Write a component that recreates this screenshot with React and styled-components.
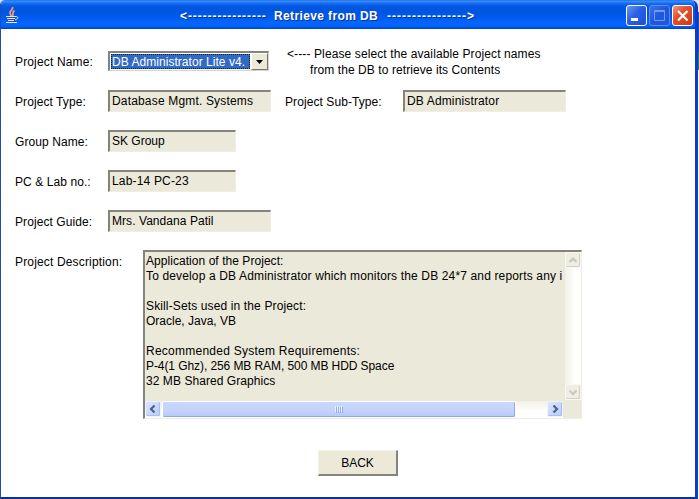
import React from 'react';
import styled, { createGlobalStyle } from 'styled-components';

const GlobalStyle = createGlobalStyle`
  * { box-sizing: border-box; }
  body {
    margin: 0;
    background: #fff;
    overflow: hidden;
    font-family: "Liberation Sans", Arial, sans-serif;
    font-size: 12px;
    color: #000;
  }
`;

const Desktop = styled.div`
  width: 699px;
  height: 499px;
  background: linear-gradient(to bottom, #dfe3f5 0 12px, #2450a8 12px 52px, #2f7a58 52px 70px, #fbfbff 70px);
`;

const Window = styled.div`
  width: 698px;
  height: 499px;
  display: flex;
  flex-direction: column;
  background: #fff;
  border: solid;
  border-width: 0 3px 2px 1px;
  border-color: #0a35b8 #0a3cc8 #0c2f9c #1f4fa8;
  border-radius: 5px 7px 0 0;
  overflow: hidden;
`;

const TitleBar = styled.header`
  height: 29px;
  flex: none;
  margin-right: -3px;
  display: flex;
  align-items: center;
  padding: 2px 5px 0 3px;
  background: linear-gradient(to bottom, #1c5fdc 0, #3b92ff 1px, #1873f5 3px, #0458e4 6px, #0055e0 11px, #005bef 18px, #0566ff 23px, #0264fb 26px, #0050dc 28px, #0040bb 29px);
`;

const JavaIcon = styled.svg`
  width: 16px;
  height: 18px;
  flex: none;
  margin-top: -2px;
`;

const Title = styled.h1`
  margin: 0 0 0 160px;
  display: flex;
  align-items: center;
  font-size: 12px;
  line-height: 16px;
  font-weight: 700;
  color: #fff;
  white-space: pre;
  text-shadow: 1px 1px 0 #0a3391;
`;

const TitlePart = styled.span`
  width: ${(p) => p.$width}px;
  letter-spacing: ${(p) => p.$spacing}px;
`;

const Controls = styled.div`
  margin-left: auto;
  display: flex;
  gap: 2px;
`;

const ControlButton = styled.button`
  width: 21px;
  height: 21px;
  padding: 0;
  border: 1px solid ${(p) => (p.$tone === 'dim' ? '#5a8df0' : '#fff')};
  border-radius: 3px;
  background: ${(p) =>
    p.$tone === 'close'
      ? 'linear-gradient(135deg, #f09a80, #e2502c 40%, #cf3a14)'
      : p.$tone === 'dim'
        ? 'linear-gradient(135deg, #3c72e4, #2058dc 50%, #1a58e0)'
        : 'linear-gradient(135deg, #6d97f4, #2a5ee4 45%, #1c50d8)'};

  svg { display: block; width: 19px; height: 19px; }
`;

const Content = styled.main`
  flex: 1;
  padding: 12px 0 0 14px;
`;

const Row = styled.div`
  display: flex;
  align-items: flex-start;
  height: ${(p) => p.$height || 40}px;
`;

const Label = styled.label`
  width: ${(p) => p.$width}px;
  flex: none;
  padding-top: 13px;
  line-height: 16px;
  letter-spacing: ${(p) => p.$spacing ?? 0.08}px;
  white-space: nowrap;
`;

const Field = styled.div`
  width: ${(p) => p.$width}px;
  height: 22px;
  flex: none;
  margin: 9px ${(p) => p.$after || 0}px 0 0;
  padding: 2px 0 0 2px;
  border: solid;
  border-width: 2px 1px 1px 2px;
  border-color: #858478 #f0eee2 #f0eee2 #858478;
  background: #ebe9d9;
  line-height: 15px;
  letter-spacing: ${(p) => p.$spacing || 0}px;
  white-space: nowrap;
`;

const Combo = styled.div`
  width: 161px;
  height: 20px;
  flex: none;
  margin: 10px 17px 0 0;
  display: flex;
  border: solid;
  border-width: 2px 1px 1px 2px;
  border-color: #858478 #d8d5c6 #d8d5c6 #858478;
  background: #fff;
`;

const Selected = styled.div`
  flex: 1;
  margin: 1px 1px 1px 1px;
  border: 1px dotted #0c1c3c;
  background: #316ac5;
  color: #fff;
  line-height: 14px;
  letter-spacing: ${(p) => p.$spacing}px;
  white-space: nowrap;
  overflow: hidden;
`;

const DropButton = styled.button`
  width: 17px;
  padding: 0;
  display: flex;
  align-items: center;
  justify-content: center;
  border: 1px solid;
  border-color: #fff #77766a #77766a #fff;
  background: #ece9d8;
`;

const Hint = styled.p`
  margin: 5px 0 0 1px;
  line-height: 16px;
  white-space: pre;
`;

const HintLine = styled.span`
  display: block;
  padding-left: ${(p) => p.$indent}px;
  letter-spacing: ${(p) => p.$spacing}px;
`;

const TextArea = styled.div`
  width: 439px;
  height: 169px;
  margin-top: 9px;
  display: grid;
  grid-template-columns: 1fr 18px;
  grid-template-rows: 1fr 17px;
  border: solid;
  border-width: 2px 1px 1px 2px;
  border-color: #858478 #f0eee2 #f0eee2 #858478;
  background: #ebe9d9;
`;

const TextBody = styled.div`
  min-width: 0;
  padding: 2px 0 0 1px;
  overflow: hidden;
  white-space: pre;
`;

const TextLine = styled.div`
  height: 15px;
  line-height: 15px;
  letter-spacing: ${(p) => p.$spacing || 0}px;
`;

const VerticalBar = styled.div`
  margin: 0 0 1px 2px;
  display: flex;
  flex-direction: column;
  justify-content: space-between;
  background: linear-gradient(to right, #f1f0e8, #fefefb 60%, #fff);
`;

const HorizontalBar = styled.div`
  display: flex;
  align-items: stretch;
  background: linear-gradient(to bottom, #f1f0e8, #fefefb 60%, #fff);
`;

const ArrowButton = styled.button`
  width: 16px;
  height: 16px;
  flex: none;
  padding: 0;
  border: 1px solid ${(p) => (p.$disabled ? '#f8f7f0' : '#edf2ff')};
  border-radius: 2px;
  box-shadow: inset -1px -1px 0 ${(p) => (p.$disabled ? '#d3d1c3' : '#aabff0')};
  background: ${(p) => (p.$disabled ? '#efeee5' : 'linear-gradient(135deg, #dae5ff, #b9ccfb)')};

  svg { display: block; width: 14px; height: 14px; }
`;

const Thumb = styled.div`
  width: 354px;
  margin: 0 auto 0 1px;
  display: flex;
  align-items: center;
  justify-content: center;
  gap: 1px;
  border: 1px solid #fff;
  border-radius: 2px;
  box-shadow: inset -1px -1px 0 #8fabdf;
  background: linear-gradient(to bottom, #c9d8ff, #c3d3fd 60%, #b4c8f8);
`;

const Grip = styled.i`
  width: 1px;
  height: 6px;
  background: #8cabf1;
  box-shadow: -1px -1px 0 #eef4fe;
`;

const BackButton = styled.button`
  display: block;
  width: 80px;
  height: 26px;
  margin: 0 0 0 303px;
  padding: 0;
  border: solid;
  border-width: 1px 2px 2px 1px;
  border-color: #f4f2e8 #858478 #858478 #f4f2e8;
  background: #ece9d8;
  font: 12px "Liberation Sans", Arial, sans-serif;
  color: #000;
`;

function Arrow({ direction, disabled }) {
  const paths = {
    up: 'M3.5 9 7 5.5 10.5 9',
    down: 'M3.5 5.5 7 9 10.5 5.5',
    left: 'M8.5 3.5 5 7l3.5 3.5',
    right: 'M5.5 3.5 9 7l-3.5 3.5',
  };
  return (
    <ArrowButton $disabled={disabled} aria-label={direction}>
      <svg viewBox="0 0 14 14" fill="none" stroke={disabled ? '#c9c7ba' : '#4d6185'} strokeWidth="2.2">
        <path d={paths[direction]} />
      </svg>
    </ArrowButton>
  );
}

const description = [
  ['Application of the Project:', 0.05],
  ['To develop a DB Administrator which monitors the DB 24*7 and reports any i', 0.147],
  ['', 0],
  ['Skill-Sets used in the Project:', 0.13],
  ['Oracle, Java, VB', 0],
  ['', 0],
  ['Recommended System Requirements:', 0.25],
  ['P-4(1 Ghz), 256 MB RAM, 500 MB HDD Space', -0.08],
  ['32 MB Shared Graphics', 0.06],
];

export default function App() {
  return (
    <Desktop>
      <GlobalStyle />
      <Window>
        <TitleBar>
          <JavaIcon viewBox="0 0 16 18" fill="none">
            <path d="M4 11h7v5H5z" fill="#33489a" />
            <path d="M8.500 1C10 3.500 5 4.500 6 7.500c.4 1 1.300 1.500 1 2.500M10.500 4.500C8 6 9.500 7.500 8.500 10" stroke="#f39a78" strokeWidth="1.800" />
            <path d="M2 10.500h10M3 12.500h8M4 14.500h6M2 16.500h11" stroke="#dfe6f8" strokeWidth="1.200" />
            <path d="M12 10.500c3 0 2 3-1 3" stroke="#dfe6f8" />
          </JavaIcon>
          <Title>
            <TitlePart $width={94} $spacing={0.93}>{'<----------------'}</TitlePart>
            <TitlePart $width={113} $spacing={0.37}>Retrieve from DB</TitlePart>
            <TitlePart $width={92} $spacing={1}>{'---------------->'}</TitlePart>
          </Title>
          <Controls>
            <ControlButton aria-label="Minimize">
              <svg viewBox="0 0 19 19"><path d="M4 12h7v3H4z" fill="#fff" /></svg>
            </ControlButton>
            <ControlButton $tone="dim" aria-label="Maximize">
              <svg viewBox="0 0 19 19"><path d="M4.500 4.500h10v10h-10zM4.500 5.500h10" fill="none" stroke="#729bf0" /></svg>
            </ControlButton>
            <ControlButton $tone="close" aria-label="Close">
              <svg viewBox="0 0 19 19"><path d="m5 5 9.500 9.500M14.500 5 5 14.500" stroke="#fff" strokeWidth="2.200" /></svg>
            </ControlButton>
          </Controls>
        </TitleBar>
        <Content>
          <Row>
            <Label $width={93} $spacing={0.15}>Project Name:</Label>
            <Combo>
              <Selected $spacing={0.04}>DB Administrator Lite v4.</Selected>
              <DropButton aria-label="Open list">
                <svg width="7" height="4" viewBox="0 0 7 4"><path d="M0 0h7L3.500 4z" /></svg>
              </DropButton>
            </Combo>
            <Hint>
              <HintLine $indent={0} $spacing={0.11}>{'<---- Please select the available Project names'}</HintLine>
              <HintLine $indent={23} $spacing={0.08}>from the DB to retrieve its Contents</HintLine>
            </Hint>
          </Row>
          <Row>
            <Label $width={93}>Project Type:</Label>
            <Field $width={163} $after={14} $spacing={0.17}>Database Mgmt. Systems</Field>
            <Label $width={118}>Project Sub-Type:</Label>
            <Field $width={163} $spacing={0.14}>DB Administrator</Field>
          </Row>
          <Row>
            <Label $width={93}>Group Name:</Label>
            <Field $width={128}>SK Group</Field>
          </Row>
          <Row>
            <Label $width={93}>PC &amp; Lab no.:</Label>
            <Field $width={128} $spacing={0.17}>Lab-14 PC-23</Field>
          </Row>
          <Row>
            <Label $width={93}>Project Guide:</Label>
            <Field $width={163} $spacing={0.06}>Mrs. Vandana Patil</Field>
          </Row>
          <Row $height={209}>
            <Label $width={128} $spacing={0.16}>Project Description:</Label>
            <TextArea>
              <TextBody>
                {description.map(([text, spacing], i) => (
                  <TextLine key={i} $spacing={spacing}>{text}</TextLine>
                ))}
              </TextBody>
              <VerticalBar>
                <Arrow direction="up" disabled />
                <Arrow direction="down" disabled />
              </VerticalBar>
              <HorizontalBar>
                <Arrow direction="left" />
                <Thumb><Grip /><Grip /><Grip /><Grip /></Thumb>
                <Arrow direction="right" />
              </HorizontalBar>
            </TextArea>
          </Row>
          <BackButton>BACK</BackButton>
        </Content>
      </Window>
    </Desktop>
  );
}
